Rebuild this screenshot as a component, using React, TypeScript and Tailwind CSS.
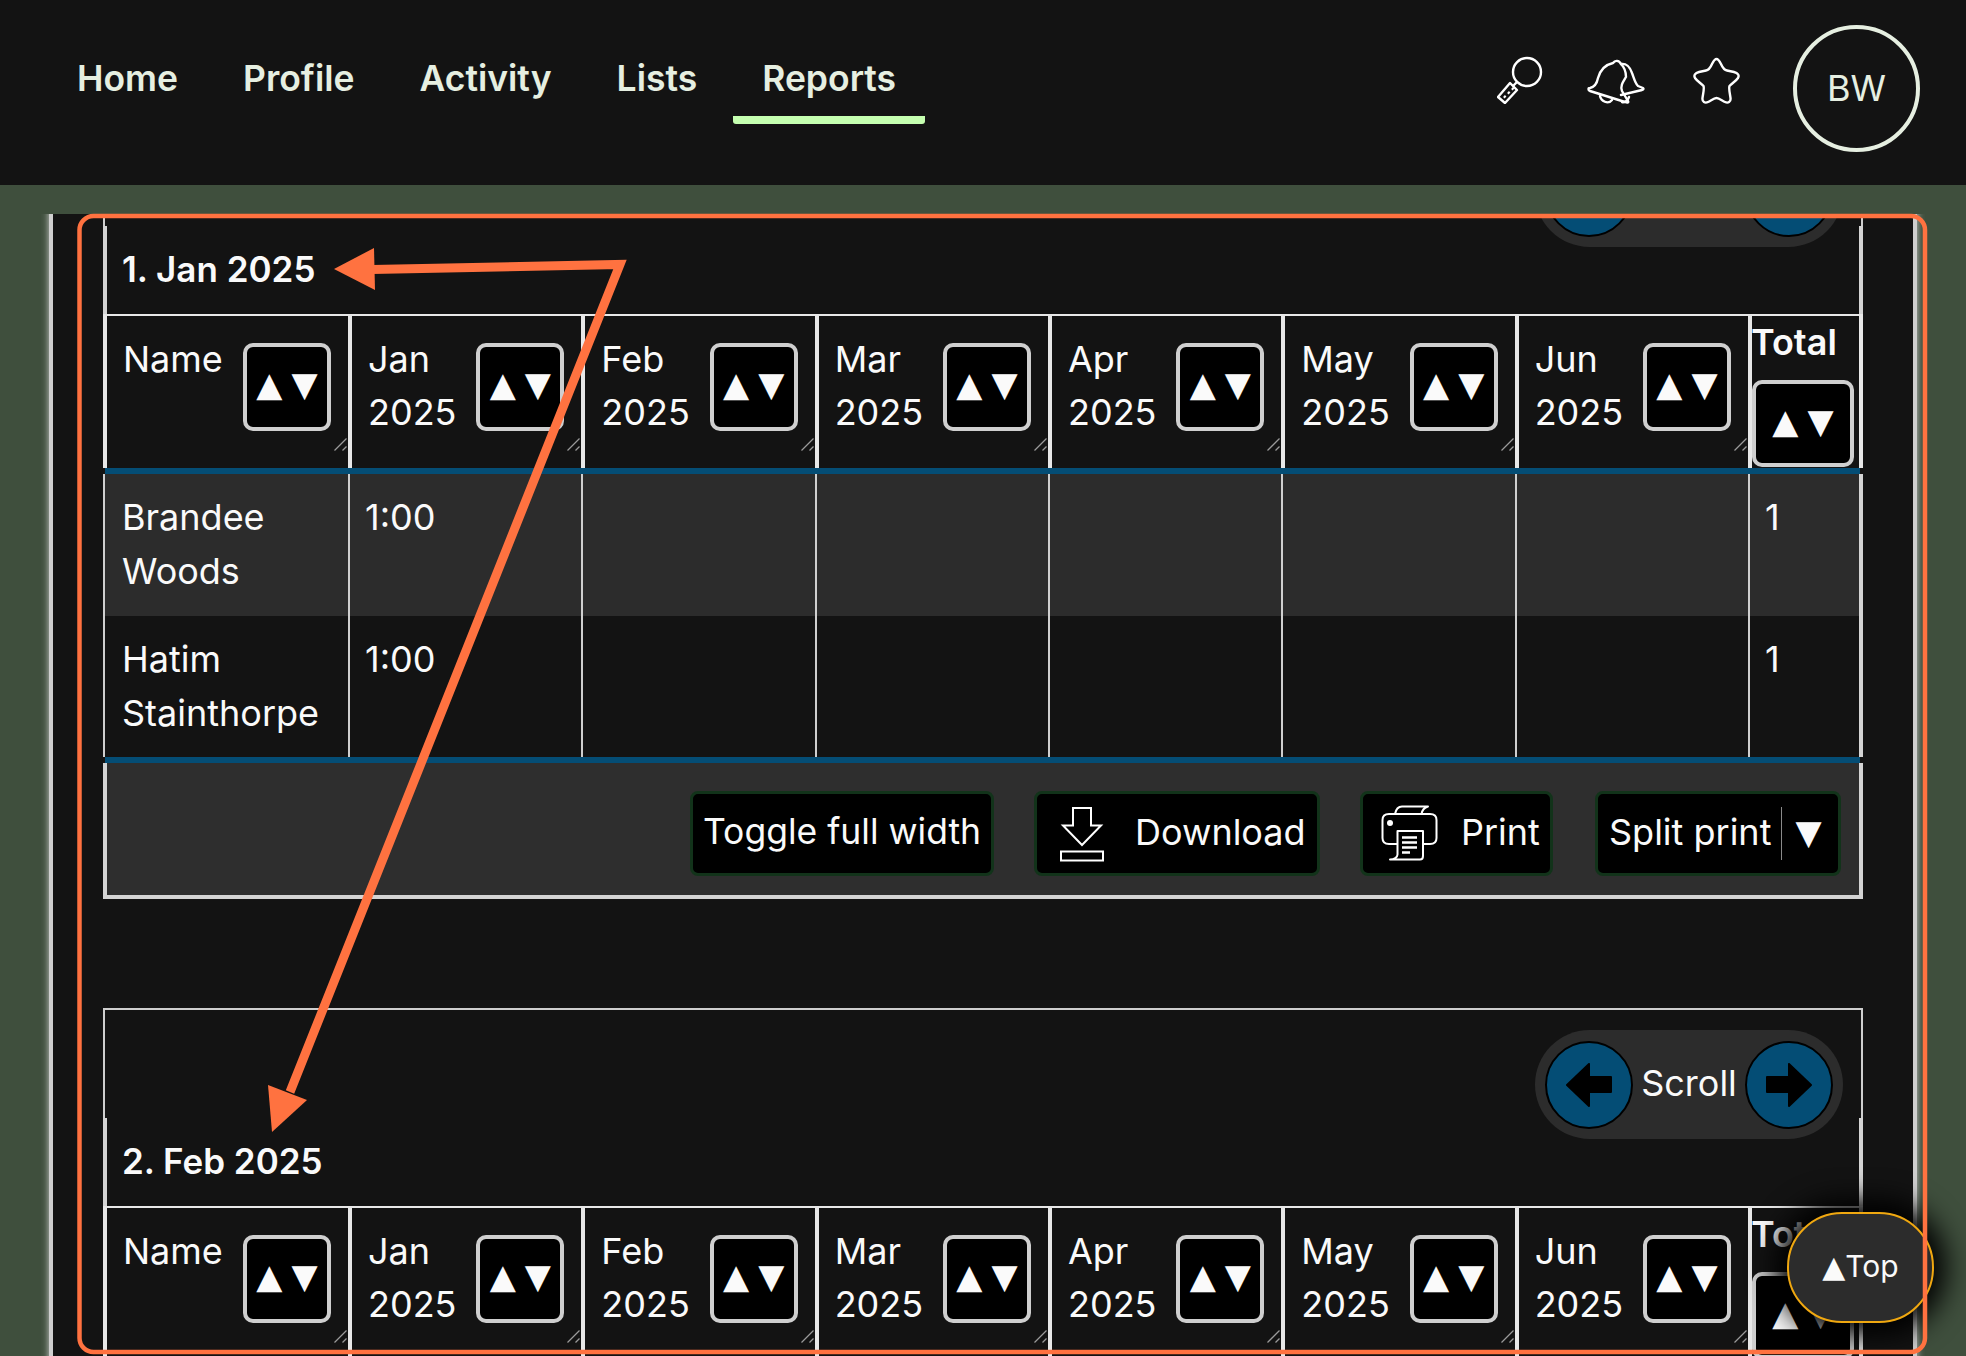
import React from "react";

const navItems = ["Home", "Profile", "Activity", "Lists", "Reports"];
const months = ["Jan", "Feb", "Mar", "Apr", "May", "Jun"];

const rows = [
  { name: ["Brandee", "Woods"], time: "1:00", total: "1", shaded: true, height: "h-[142px]" },
  { name: ["Hatim", "Stainthorpe"], time: "1:00", total: "1", shaded: false, height: "h-[141px]" },
];

function SearchIcon() {
  return (
    <svg width="46" height="48" viewBox="0 0 46 48" fill="none" stroke="#fff" strokeWidth="2.4" strokeLinejoin="round">
      <circle cx="30" cy="16" r="14" />
      <path d="M20 26l-4 4" />
      <path d="M1 41l7 6 12-13-7-7z" />
      <path d="M7 40l1.5 1.5M11 36l1.5 1.5M15 32l1.5 1.5" strokeWidth="2.6" />
    </svg>
  );
}

function BellIcon() {
  return (
    <svg width="58" height="48" viewBox="0 0 58 48" fill="none" stroke="#fff" strokeWidth="2.4" strokeLinecap="round" strokeLinejoin="round">
      <path d="M26 5c2-3 6-3 8 1 3 3 5 8 5 13-3 5-6 9-4 14l6 10c1 2-1 2-3 1L3 33c-2-1-2-3 0-3 5-1 7-5 8-10 2-7 6-13 15-15z" />
      <path d="M34 6c5-1 9 3 11 9 2 5 3 10 6 13l5 2c1 1 0 2-1 2l-21 5" />
      <path d="M13 38c1 5 8 9 12 4" />
      <path d="M35 44c3 1 6-2 7-5" />
    </svg>
  );
}

function StarIcon() {
  return (
    <svg width="47" height="48" viewBox="0 0 47 48" fill="none" stroke="#fff" strokeWidth="2.4" strokeLinejoin="round">
      <path d="M23.5 2C25.5 2 26.5 4 28 7C29.5 10.5 31 13 34 13.5L41 15C45 16 46.5 18.5 45 21C43 24 38 27 36.5 29C35.5 31 37 37 37.5 41C38 45 35 46.5 32 45C29 43.5 26 41 23.5 41C21 41 18 43.5 15 45C12 46.5 9 45 9.5 41C10 37 11.5 31 10.5 29C9 27 4 24 2 21C0.5 18.5 2 16 6 15L13 13.5C16 13 17.5 10.5 19 7C20.5 4 21.5 2 23.5 2Z" />
    </svg>
  );
}

function DownloadIcon() {
  return (
    <svg width="46" height="56" viewBox="0 0 46 56" fill="none" stroke="#fff" strokeWidth="2">
      <path d="M14 2H32V19.5H42L23 39L4 19.5H14Z" />
      <rect x="2" y="45.5" width="42" height="9" />
    </svg>
  );
}

function PrintIcon() {
  return (
    <svg width="57" height="57" viewBox="0 0 57 57" fill="none" stroke="#fff" strokeWidth="2" strokeLinejoin="round">
      <path d="M14 9c1-5 3-7.5 7-7.5h26c-3 1-6 4-6.500 7.500" />
      <path d="M16 39H8c-4 0-6.500-2-6.500-6V15c0-4 2.500-6 6.500-6h41c4 0 6.500 2 6.500 6v18c0 4-2.500 6-6.500 6h-7" />
      <path d="M16.500 26H42v25c0 2-1 3.500-3 3.500H9c4 0 7.500-2 7.500-5z" />
      <path d="M21 32.500h15M21 37.500h15M21 42.500h15M21 47.500h8" strokeWidth="2.400" />
      <circle cx="9" cy="18" r="3" fill="#fff" stroke="none" />
    </svg>
  );
}

function ResizeGrip() {
  return (
    <svg className="absolute bottom-[17px] right-[1px]" width="13" height="13" viewBox="0 0 13 13" stroke="#9a9a9a" strokeWidth="1.300" fill="none">
      <path d="M0.500 12.500L12.500 0.500M8.500 12.500L12.500 8.500" />
    </svg>
  );
}

function SortButton({ wide }: { wide?: boolean }) {
  return (
    <button
      className={`flex shrink-0 items-center justify-center gap-[9px] rounded-[10px] border-4 border-[#cfcfcf] bg-black pb-[6px] font-['DejaVu_Sans',sans-serif] text-[34px] leading-none text-[#fafafa] ${
        wide ? "h-[87px] w-[102px]" : "h-[88px] w-[88px]"
      }`}
    >
      <span>▲</span>
      <span>▼</span>
    </button>
  );
}

function ScrollPill() {
  return (
    <div className="flex h-[109px] w-[308px] items-center justify-between rounded-[55px] bg-[#2c2c2c] px-[10px] text-[36px] text-[#fafafa]">
      <button className="flex h-[88px] w-[88px] items-center justify-center rounded-full border-2 border-black bg-[#044d75]">
        <svg width="46" height="44" viewBox="0 0 46 44" fill="black" stroke="black" strokeWidth="2" strokeLinejoin="round">
          <path d="M1 22L23 1V14H45V29H23V43Z" />
        </svg>
      </button>
      <span className="pb-[3px]">Scroll</span>
      <button className="flex h-[88px] w-[88px] items-center justify-center rounded-full border-2 border-black bg-[#044d75]">
        <svg width="46" height="44" viewBox="0 0 46 44" fill="black" stroke="black" strokeWidth="2" strokeLinejoin="round">
          <path d="M45 22L23 1V14H1V29H23V43Z" />
        </svg>
      </button>
    </div>
  );
}

function HeaderCell({ label }: { label: string }) {
  return (
    <div className="relative flex items-start justify-between border-r-4 border-[#e8e8e8] pl-[16px] pr-[17px] pt-[17px]">
      <span className="whitespace-pre-line leading-[53px]">{label}</span>
      <div className="mt-[10px]">
        <SortButton />
      </div>
      <ResizeGrip />
    </div>
  );
}

function ReportTable({ title, withRows }: { title: string; withRows?: boolean }) {
  return (
    <section className="w-[1760px] text-[36px] text-[#fafafa]">
      <div className="flex h-[110px] items-start justify-end border-x-2 border-t-2 border-[#cfcfcf] pr-[18px] pt-[20px]">
        <ScrollPill />
      </div>

      <div className="flex h-[88px] items-center border-x-4 border-[#d4d4d4] pb-[2px] pl-[15px] text-[35px] font-semibold">
        {title}
      </div>

      {/* header row */}
      <div className="grid h-[154px] grid-cols-[245px_repeat(6,233.33px)_1fr] border-x-4 border-t-2 border-[#e8e8e8]">
        <div className="relative flex items-start justify-between border-r-4 border-[#e8e8e8] pl-[16px] pr-[17px] pt-[17px]">
          <span className="leading-[53px]">Name</span>
          <div className="mt-[10px]">
            <SortButton />
          </div>
          <ResizeGrip />
        </div>
        {months.map((m) => (
          <HeaderCell key={m} label={`${m}\n2025`} />
        ))}
        <div className="flex flex-col items-start">
          <span className="-ml-px mt-[1px] font-semibold leading-[50px]">Total</span>
          <div className="mt-[13px]">
            <SortButton wide />
          </div>
        </div>
      </div>

      <div className="ml-[2px] mr-[3px] h-[6px] bg-[#044d75]" />

      {withRows && (
        <>
          {rows.map((row) => (
            <div
              key={row.name[1]}
              className={`grid grid-cols-[245px_repeat(6,233.33px)_1fr] border-l-2 border-r-4 border-l-[#cfcfcf] border-r-[#d4d4d4] leading-[54px] ${row.height} ${
                row.shaded ? "bg-[#2c2c2c]" : ""
              }`}
            >
              <div className="border-r-2 border-[#cfcfcf] pl-[17px] pt-[16px]">
                {row.name[0]}
                <br />
                {row.name[1]}
              </div>
              <div className="border-r-2 border-[#cfcfcf] pl-[15px] pt-[16px]">{row.time}</div>
              {months.slice(1).map((m) => (
                <div key={m} className="border-r-2 border-[#cfcfcf]" />
              ))}
              <div className="pl-[15px] pt-[16px]">{row.total}</div>
            </div>
          ))}

          <div className="ml-[2px] mr-[3px] h-[6px] bg-[#044d75]" />

          <div className="flex h-[136px] items-start justify-end border-x-4 border-b-4 border-[#d4d4d4] bg-[#2e2e2e] pr-[18px] pt-[28px]">
            <button className="flex h-[85px] w-[304px] items-center justify-center rounded-[8px] border-[3px] border-[#12331a] bg-black pb-[3px] text-[35.500px]">
              Toggle full width
            </button>
            <button className="ml-[40px] flex h-[85px] w-[286px] items-center gap-[30px] rounded-[8px] border-[3px] border-[#12331a] bg-black pl-[22px]">
              <DownloadIcon />
              <span className="pb-[3px]">Download</span>
            </button>
            <button className="ml-[40px] flex h-[85px] w-[193px] items-center gap-[23px] rounded-[8px] border-[3px] border-[#12331a] bg-black pl-[18px]">
              <PrintIcon />
              <span className="pb-[3px]">Print</span>
            </button>
            <button className="ml-[42px] flex h-[85px] w-[246px] items-center rounded-[8px] border-[3px] border-[#12331a] bg-black pl-[11px]">
              <span className="pb-[3px]">Split print</span>
              <span className="ml-[10px] h-[53px] w-px bg-[#8a8a8a]" />
              <span className="ml-[13px] pb-[3px] font-['DejaVu_Sans',sans-serif] text-[34px] leading-none">▼</span>
            </button>
          </div>
        </>
      )}
    </section>
  );
}

export default function App() {
  return (
    <div className="relative h-[1356px] w-[1966px] overflow-hidden bg-[#3f4f3d] font-['Inter','DejaVu_Sans',sans-serif]">
      {/* top bar */}
      <header className="flex h-[185px] items-start justify-between bg-[#131313] pl-[48px] pr-[46px]">
        <nav className="mt-[53px] flex gap-[7px]">
          {navItems.map((item) => (
            <a
              key={item}
              className={`h-[71px] rounded-b-[3px] border-b-[8px] px-[29px] text-[35.500px] font-semibold leading-[52px] text-[#e6efe1] ${
                item === "Reports" ? "border-[#c5ffb0]" : "border-transparent"
              }`}
            >
              {item}
            </a>
          ))}
        </nav>

        <div className="mt-[25px] flex items-start">
          <div className="mr-[44px] mt-[31px]">
            <SearchIcon />
          </div>
          <div className="mr-[48px] mt-[33px]">
            <BellIcon />
          </div>
          <div className="mr-[53px] mt-[32px]">
            <StarIcon />
          </div>
          <div className="flex h-[127px] w-[127px] items-center justify-center rounded-full border-4 border-[#e6efe1] pb-[2px] text-[36px] text-[#e6efe1]">
            BW
          </div>
        </div>
      </header>

      {/* scrolled report list */}
      <div className="mt-[29px] h-[1142px] overflow-hidden">
        <main className="mx-[49px] h-[1300px] border-x-4 border-[#cfcfcf] bg-[#131313] pl-[50px] shadow-[0_0_7px_#cfcfcf]">
          <div className="-mt-[98px] flex flex-col gap-[109px]">
            <ReportTable title="1. Jan 2025" withRows />
            <ReportTable title="2. Feb 2025" />
          </div>
        </main>
      </div>

      {/* back to top */}
      <button className="absolute left-[1787px] top-[1212px] flex h-[111px] w-[147px] items-center justify-center rounded-[55px] border-2 border-[#f0a810] bg-[#2c2c2c] pb-[2px] text-[30px] text-[#fafafa] shadow-[0_0_28px_12px_#000]">
        <span className="font-['DejaVu_Sans',sans-serif] text-[30px]">▲</span>
        <span>Top</span>
      </button>

      {/* annotation */}
      <svg className="pointer-events-none absolute left-0 top-0" width="1966" height="1356" fill="none" stroke="#ff7240">
        <rect x="79.500" y="216" width="1845.500" height="1136" rx="14" strokeWidth="4.500" />
        <path d="M372 269.500L620 264.500L290 1092" strokeWidth="9" strokeLinejoin="miter" />
        <path d="M334 269L374 248L375 290Z" fill="#ff7240" stroke="none" />
        <path d="M268 1085L307 1100L272 1132Z" fill="#ff7240" stroke="none" />
      </svg>
    </div>
  );
}
